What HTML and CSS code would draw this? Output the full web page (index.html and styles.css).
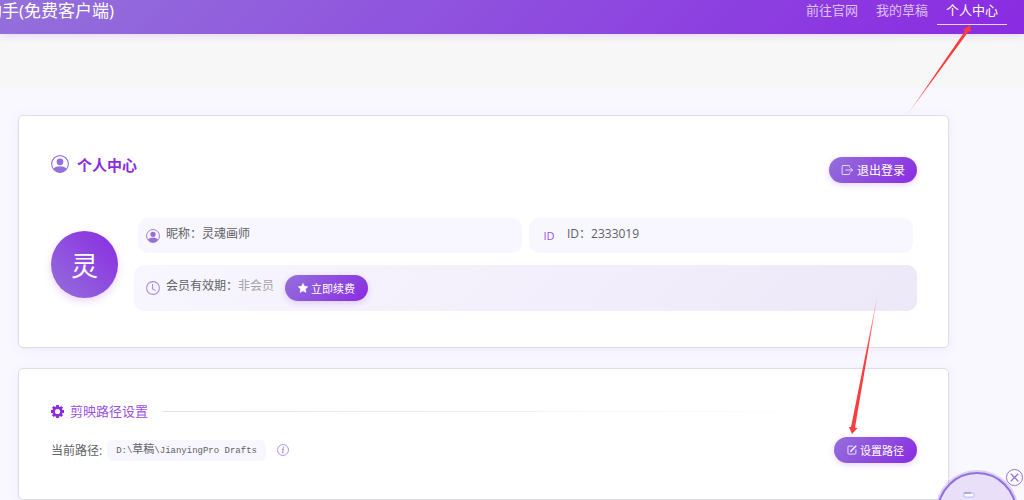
FILE: index.html
```html
<!DOCTYPE html>
<html lang="zh-CN">
<head>
    <meta charset="UTF-8">
    <meta name="viewport" content="width=device-width, initial-scale=1.0">
    <title>个人中心</title>
    <link rel="stylesheet" href="styles.css">
</head>
<body>
    <header class="navbar">
        <div class="brand">助手(免费客户端)</div>
        <nav class="nav-links">
            <a href="#">前往官网</a>
            <a href="#">我的草稿</a>
            <a href="#" class="active">个人中心</a>
        </nav>
    </header>
    <div class="banner"></div>

    <main class="container">
        <section class="card">
            <div class="card-header">
                <h1 class="card-title">
                    <svg class="icon-title" viewBox="0 0 16 16" fill="#9370db">
                        <circle cx="8" cy="8" r="7.4" fill="none" stroke="#9370db" stroke-width="1"/>
                        <circle cx="8" cy="6.1" r="3"/>
                        <path d="M2.2 12.4C3.3 10.8 5.4 10.1 8 10.1s4.7.7 5.8 2.3A7.3 7.3 0 0 1 8 15.4a7.3 7.3 0 0 1-5.8-3z"/>
                    </svg>
                    个人中心
                </h1>
                <button class="btn btn-logout">
                    <svg viewBox="0 0 16 16" fill="none" stroke="#fff" stroke-width="1">
                        <path d="M11.5 4.5V3a1 1 0 0 0-1-1h-8a1 1 0 0 0-1 1v10a1 1 0 0 0 1 1h8a1 1 0 0 0 1-1v-1.5M6 8h9M12.5 5l3 3-3 3"/>
                    </svg>
                    退出登录
                </button>
            </div>
            <div class="profile">
                <div class="avatar">灵</div>
                <div class="info">
                    <div class="info-row">
                        <div class="info-item">
                            <svg class="icon" viewBox="0 0 16 16" fill="#9370db">
                                <circle cx="8" cy="8" r="7.4" fill="none" stroke="#9370db" stroke-width="1"/>
                                <circle cx="8" cy="6.1" r="3"/>
                                <path d="M2.2 12.4C3.3 10.8 5.4 10.1 8 10.1s4.7.7 5.8 2.3A7.3 7.3 0 0 1 8 15.4a7.3 7.3 0 0 1-5.8-3z"/>
                            </svg>
                            <span class="info-text">昵称：灵魂画师</span>
                        </div>
                        <div class="info-item">
                            <span class="id-badge">ID</span>
                            <span class="info-text">ID：2333019</span>
                        </div>
                    </div>
                    <div class="vip">
                        <svg class="icon" viewBox="0 0 16 16" fill="none" stroke="#a98ae3" stroke-width="1.2">
                            <circle cx="8" cy="8" r="7.3"/>
                            <path d="M7.5 3.5V9l3.5 2"/>
                        </svg>
                        <span class="info-text">会员有效期：<span class="muted">非会员</span></span>
                        <button class="btn">
                            <svg viewBox="0 0 16 16" fill="#fff" stroke="#fff" stroke-linejoin="round">
                                <path d="M8 .6l2.4 4.700 5.200.7-3.800 3.700.9 5.300L8 12.500l-4.700 2.500.9-5.300L.4 6l5.200-.7z"/>
                            </svg>
                            立即续费
                        </button>
                    </div>
                </div>
            </div>
        </section>

        <section class="card card-path">
            <h2 class="section-title">
                <svg class="icon-gear" viewBox="0 0 16 16">
                    <circle cx="8" cy="8" r="4.8" fill="none" stroke="#8a2be2" stroke-width="3.2"/>
                    <path d="M8 0v3M8 13v3M0 8h3M13 8h3M2.3 2.3l2.1 2.1M11.6 11.6l2.1 2.1M2.3 13.7l2.1-2.1M11.6 4.4l2.1-2.1" stroke="#8a2be2" stroke-width="3.4"/>
                </svg>
                剪映路径设置
            </h2>
            <div class="path-row">
                <span class="path-label">当前路径:</span>
                <code class="path">D:\<span class="path-cjk">草稿</span>\JianyingPro Drafts</code>
                <svg class="icon-info" viewBox="0 0 16 16" fill="none" stroke="#a98ae3" stroke-width="1.2">
                    <circle cx="8" cy="8" r="7.3"/>
                    <path d="M6.6 6.8h1.8l-1 4.8h1.4" stroke-width="1.4"/>
                    <circle cx="8.7" cy="4.3" r=".5"/>
                </svg>
                <button class="btn btn-path">
                    <svg viewBox="0 0 16 16" fill="none" stroke="#fff" stroke-width="1.3">
                        <path d="M9.5 1.8h-7a1 1 0 0 0-1 1v10.7a1 1 0 0 0 1 1h10.7a1 1 0 0 0 1-1V7"/>
                        <path d="M14.7 1.3l-8 8" stroke-width="2.2"/>
                        <path d="M6.8 8.2l-1.3 2.6L8 9.5"/>
                    </svg>
                    设置路径
                </button>
            </div>
        </section>
    </main>

    <svg class="arrow arrow-up" viewBox="0 0 70 94">
        <defs>
            <linearGradient id="fade-up" x1="0" y1="1" x2="0" y2="0">
                <stop offset="0" stop-color="#ff3b3b" stop-opacity=".4"/>
                <stop offset=".4" stop-color="#ff3b3b"/>
            </linearGradient>
        </defs>
        <path fill="url(#fade-up)" d="M1.5 93.5L59 10l-2-1L64 4l1 6-2.500.5z"/>
    </svg>
    <svg class="arrow arrow-down" viewBox="0 0 40 142">
        <defs>
            <linearGradient id="fade-down" x1="0" y1="0" x2="0" y2="1">
                <stop offset="0" stop-color="#ff3b3b" stop-opacity=".4"/>
                <stop offset=".4" stop-color="#ff3b3b"/>
            </linearGradient>
        </defs>
        <path fill="url(#fade-down)" d="M33.5 1L7 133H5l3 7 5.500-6-2.500-.5z"/>
    </svg>

    <div class="helper">
        <svg viewBox="0 0 12 6">
            <rect x="1" y="1" width="10" height="4" rx="1" fill="#fff" stroke="#a9c4f5"/>
            <path d="M1 1h7" stroke="#8f7be8"/>
        </svg>
    </div>
    <button class="helper-close" aria-label="关闭">
        <svg viewBox="0 0 16 16" fill="none" stroke="#9370db" stroke-width="1.4">
            <path d="M4 4l8 8M12 4l-8 8"/>
        </svg>
    </button>
</body>
</html>
```
FILE: styles.css
```css
* {
    box-sizing: border-box;
}

body {
    margin: 0;
    background: #f9f8ff;
    color: #606266;
    font-family: "Open Sans", "Noto Sans CJK SC", sans-serif;
    font-size: 12px;
    min-height: 100vh;
    position: relative;
    overflow: hidden;
}

.navbar {
    display: flex;
    justify-content: space-between;
    height: 34px;
    padding-right: 17px;
    background: linear-gradient(135deg, #9370db, #8a2be2);
    box-shadow: 0 2px 8px rgba(138, 43, 226, 0.15);
    position: relative;
}

.brand {
    margin-left: -15px;
    color: #fff;
    font-size: 17px;
    line-height: 22px;
    white-space: nowrap;
}

.nav-links {
    display: flex;
}

.nav-links a {
    height: 25px;
    padding: 0 9px;
    color: rgba(255, 255, 255, 0.7);
    font-size: 13px;
    line-height: 20px;
    text-decoration: none;
}

.nav-links .active {
    color: #fff;
    border-bottom: 1px solid #e6d5f9;
}

.banner {
    height: 53px;
    background: #f7f7f7;
}

.container {
    display: flex;
    flex-direction: column;
    gap: 20px;
    padding: 28px 75px 0 18px;
}

.card {
    padding: 41px 31px 36px 32px;
    background: #fff;
    border: 1px solid #dedde6;
    border-radius: 5px;
    box-shadow: 0 2px 12px rgba(147, 112, 219, 0.1);
}

.card-path {
    padding-top: 32px;
}

.card-header {
    display: flex;
    justify-content: space-between;
    align-items: flex-start;
}

.card-title {
    display: flex;
    align-items: center;
    gap: 8px;
    height: 14px;
    margin: 0;
    color: #8a2be2;
    font-size: 15px;
}

.icon-title {
    width: 18px;
    height: 18px;
}

.btn {
    display: flex;
    align-items: center;
    justify-content: center;
    gap: 3px;
    width: 83px;
    height: 26px;
    padding: 0;
    border: none;
    border-radius: 13px;
    background: linear-gradient(135deg, #9370db, #8a2be2);
    box-shadow: 0 2px 6px rgba(138, 43, 226, 0.2);
    color: #fff;
    font-family: inherit;
    font-size: 11px;
    cursor: pointer;
}

.btn svg {
    width: 10px;
    height: 10px;
}

.btn-logout {
    gap: 4px;
    width: 88px;
    font-size: 12px;
}

.btn-logout svg {
    width: 12px;
    height: 12px;
}

.profile {
    display: flex;
    align-items: center;
    gap: 16px;
    margin-top: 35px;
}

.avatar {
    display: flex;
    align-items: center;
    justify-content: center;
    width: 67px;
    height: 67px;
    border-radius: 50%;
    background: linear-gradient(45deg, #9370db, #8a2be2);
    box-shadow: 0 3px 8px rgba(138, 43, 226, 0.2);
    color: #fff;
    font-size: 27px;
}

.info {
    flex: 1;
}

.info-row {
    display: grid;
    grid-template-columns: 1fr 1fr;
    gap: 7px;
    padding: 0 4px;
    margin-bottom: 12px;
}

.info-item {
    display: flex;
    align-items: center;
    gap: 6px;
    height: 35px;
    padding: 0 8px;
    border-radius: 10px;
    background: #f8f6ff;
}

.icon {
    width: 14px;
    height: 14px;
}

.info-text {
    padding-bottom: 4px;
    line-height: 18px;
}

.id-badge {
    width: 24px;
    border-radius: 4px;
    background: #f8f8fc;
    color: #9b4fe6;
    font-size: 11px;
    line-height: 14px;
    text-align: center;
}

.vip {
    display: flex;
    align-items: center;
    gap: 6px;
    height: 46px;
    padding: 0 12px;
    border-radius: 10px;
    background: linear-gradient(135deg, #f8f6ff, #ede8f8);
}

.vip .btn {
    margin-left: 5px;
}

.muted {
    color: #a3a3a8;
}

.section-title {
    display: flex;
    align-items: center;
    gap: 6px;
    margin: 0 0 16px;
    color: #9b4fe6;
    font-size: 13px;
    font-weight: normal;
    line-height: 20px;
}

.section-title::after {
    content: "";
    flex: 1;
    height: 1px;
    margin-left: 8px;
    background: linear-gradient(to right, #e9defa, transparent 90%);
}

.icon-gear {
    width: 13px;
    height: 13px;
}

.path-row {
    display: flex;
    align-items: center;
}

.path {
    margin: 0 11px 0 5px;
    padding: 0 9px;
    border-radius: 6px;
    background: #f8f6ff;
    font-family: "Liberation Mono", "Noto Sans CJK SC", monospace;
    font-size: 9px;
    line-height: 20px;
}

.path-cjk {
    font-size: 11px;
}

.icon-info {
    width: 12px;
    height: 12px;
}

.btn-path {
    margin-left: auto;
}

/* pointer arrows over the page */
.arrow {
    position: absolute;
    pointer-events: none;
}

.arrow-up {
    top: 21px;
    right: 48px;
    width: 70px;
    height: 94px;
}

.arrow-down {
    top: 294px;
    right: 140px;
    width: 40px;
    height: 142px;
}

/* floating helper */
.helper {
    position: fixed;
    right: 7px;
    bottom: -52px;
    width: 80px;
    height: 80px;
    border: 2px solid #9370db;
    border-radius: 50%;
    background: #eadff8;
    box-shadow: 0 0 0 2px rgba(147, 112, 219, 0.3);
}

.helper svg {
    position: absolute;
    top: 18px;
    left: 24px;
    width: 12px;
    height: 6px;
}

.helper-close {
    position: fixed;
    right: 1px;
    bottom: 14px;
    display: flex;
    align-items: center;
    justify-content: center;
    width: 17px;
    height: 17px;
    padding: 0;
    border: 1px solid #9370db;
    border-radius: 50%;
    background: #fff;
    cursor: pointer;
}

.helper-close svg {
    width: 15px;
    height: 15px;
    flex: none;
}
```
